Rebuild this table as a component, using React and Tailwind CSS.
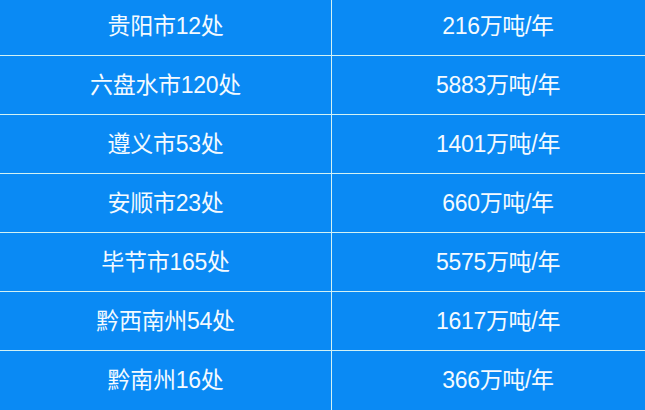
const rows = [
  ["贵阳市12处", "216万吨/年"],
  ["六盘水市120处", "5883万吨/年"],
  ["遵义市53处", "1401万吨/年"],
  ["安顺市23处", "660万吨/年"],
  ["毕节市165处", "5575万吨/年"],
  ["黔西南州54处", "1617万吨/年"],
  ["黔南州16处", "366万吨/年"],
];

export default function App() {
  return (
    <div
      className="w-[645px] h-[410px] overflow-hidden bg-[#0a8af4] text-[#f4faff]"
      style={{ fontFamily: '"Liberation Sans", "Noto Sans CJK SC", sans-serif' }}
    >
      <div className="-mt-[3px] w-[664px]">
        {rows.map(([city, amount], i) => (
          <div
            key={i}
            className="flex h-[59px] border-b border-[#d2f2f4] last:border-b-0"
          >
            <div className="w-[332px] flex items-center justify-center border-r border-[#d2f2f4] text-[23px] tracking-[-0.3px]">
              {city}
            </div>
            <div className="flex-1 flex items-center justify-center text-[23px] tracking-[-0.3px]">
              {amount}
            </div>
          </div>
        ))}
      </div>
    </div>
  );
}
